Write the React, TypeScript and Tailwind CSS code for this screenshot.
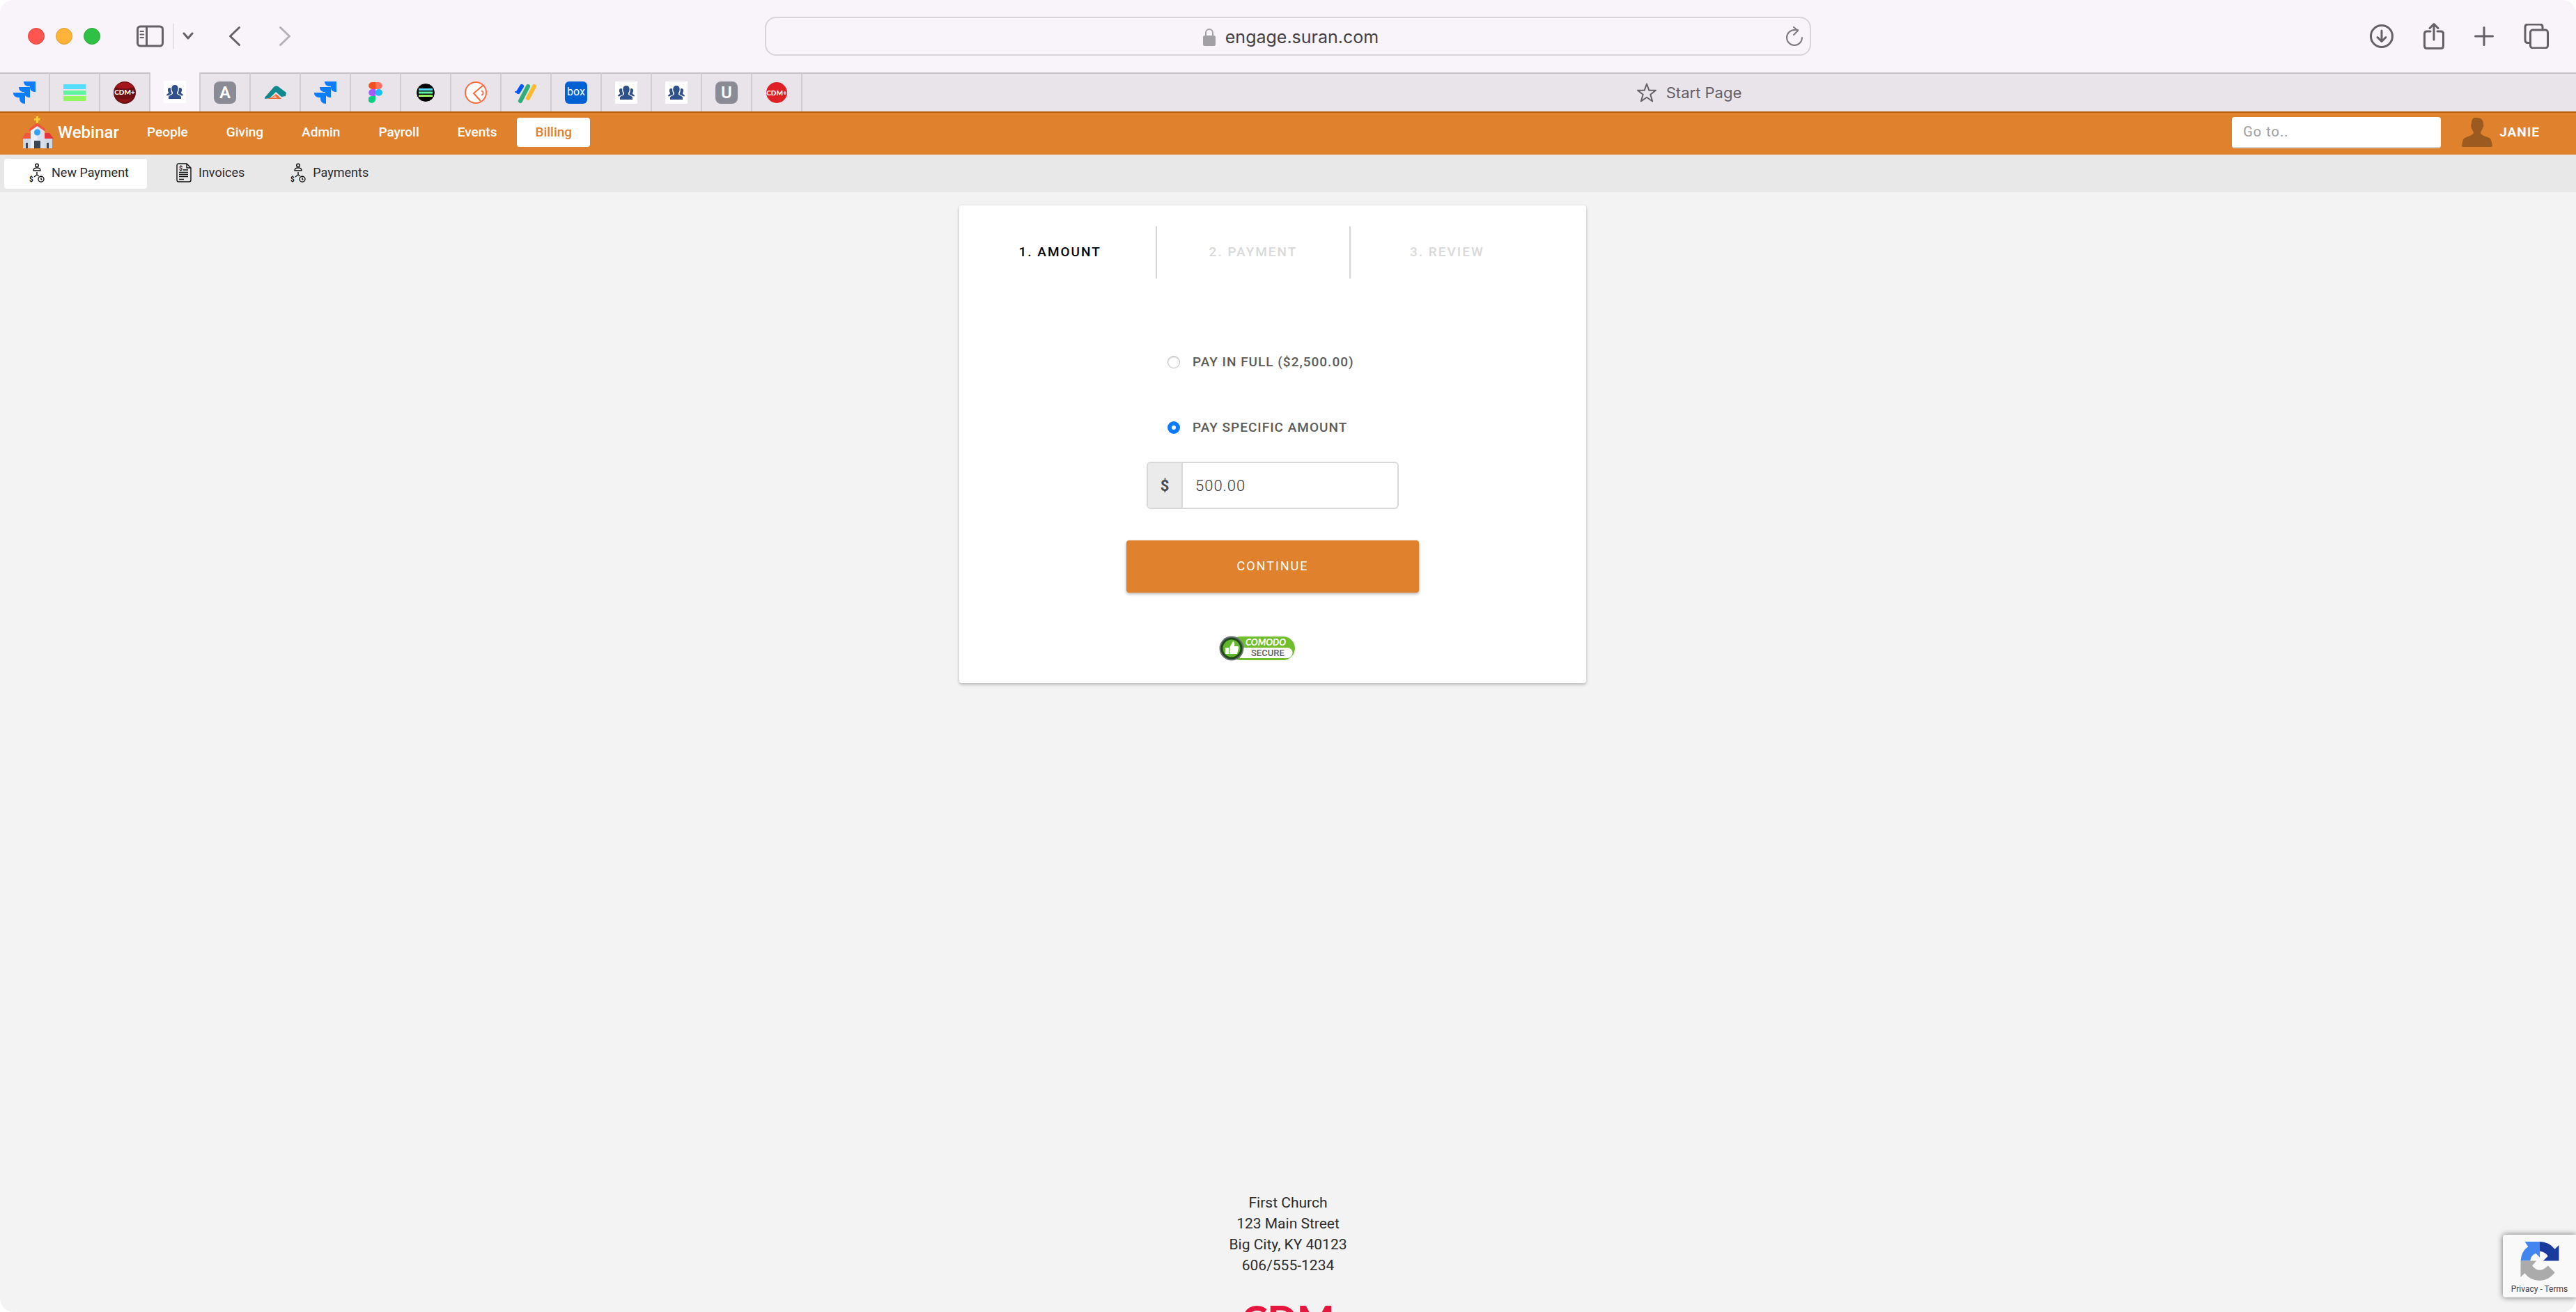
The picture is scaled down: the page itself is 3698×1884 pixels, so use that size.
import type { ReactNode } from "react";

const navItems = ["People", "Giving", "Admin", "Payroll", "Events"];

function JiraIcon() {
  return (
    <svg viewBox="0 0 32 36" preserveAspectRatio="none" className="size-8" fill="#0d7dff">
      <path d="M15 0h17v17c-5 0-8-3-8-8V8h-1c-5 0-8-3-8-8Z" />
      <path d="M8 9h16v17c-5 0-8-3-8-8v-1h-1c-4 0-7-3-7-8Z" />
      <path d="M0 18h17v18c-5 0-8-3-8-9v-1H8c-5 0-8-3-8-8Z" />
    </svg>
  );
}

function GreenBarsIcon() {
  return (
    <svg viewBox="0 0 32 24" className="h-6 w-8">
      <path d="M0 0h32v7H0z" fill="#55ddff" />
      <path d="M0 9h32v6H0z" fill="#5ff5a0" />
      <path d="M0 17h32v7H0z" fill="#93f65f" />
    </svg>
  );
}

function CdmRoundIcon() {
  return (
    <svg viewBox="0 0 32 32" className="size-8">
      <circle cx="16" cy="16" r="16" fill="#6d0f13" />
      <path d="M3 8a16 16 0 0 1 26 0q-13 5-26 0Z" fill="#a5141a" />
      <path d="M5 23q11 5 22 0-4 7-11 7T5 23Z" fill="#8d1217" />
      <text x="16" y="19" textAnchor="middle" fontSize="10" fontWeight="900" fill="#fff" fontFamily="Lato, sans-serif">CDM+</text>
    </svg>
  );
}

function PeopleIcon() {
  return (
    <span className="flex size-8 items-center justify-center bg-white">
      <svg viewBox="0 0 24 20" className="h-5 w-6" fill="#2f5089">
        <path d="M12 0c3.200 0 4.800 2.200 4.700 5.300 0 2.700-1.200 4-1.700 5.200v1.800c.5 2.200 5.500 1.800 6 5.200v2.500H3v-2.500c.5-3.400 5.500-3 6-5.200v-1.800C8.500 9.300 7.300 8 7.300 5.300 7.200 2.200 8.800 0 12 0Z" />
        <path d="M4.500 4C3 4 1.800 5.200 1.900 7.300c0 1.700.9 2.600 1.100 3.500 0 2-2.700 1.700-3 4.400h2.800c1-1.400 3.600-1.700 4.600-2.700V11C6.500 9.500 6 7.500 6.200 4.500Q5.500 4 4.500 4ZM19.500 4c1.500 0 2.700 1.200 2.600 3.300 0 1.700-.9 2.600-1.100 3.500 0 2 2.700 1.700 3 4.400h-2.800c-1-1.400-3.600-1.700-4.600-2.700V11c.9-1.500 1.400-3.500 1.200-6.500q.7-.5 1.700-.5Z" />
      </svg>
    </span>
  );
}

function LetterIcon({ letter }: { letter: string }) {
  return (
    <span className="flex size-8 items-center justify-center rounded-lg bg-[#8a8b95] text-2xl font-semibold text-white">
      {letter}
    </span>
  );
}

function PeakIcon() {
  return (
    <svg viewBox="0 0 32 20" className="h-5 w-8">
      <path d="M1 17 14 2q3-3 6-1l12 9-1 5-6 1-8-7-9 9-7 1Z" fill="#12888f" />
      <path d="M2 19q8 0 15-7l3 2 5 5Z" fill="#ef6c36" />
      <path d="m11 18 5-4 3 4Z" fill="#f8b48f" />
    </svg>
  );
}

function FigmaIcon() {
  return (
    <svg viewBox="0 0 20 32" preserveAspectRatio="none" className="h-[30px] w-5">
      <path d="M10 0H5.500a5.300 5.300 0 0 0 0 10.600H10Z" fill="#f24e1e" />
      <path d="M10 0h4.500a5.300 5.300 0 0 1 0 10.600H10Z" fill="#ff7262" />
      <path d="M10 10.600H5.500a5.300 5.300 0 0 0 0 10.600H10Z" fill="#a259ff" />
      <circle cx="14.800" cy="15.900" r="5.200" fill="#1abcfe" />
      <path d="M10 21.300H5.300A5.300 5.300 0 1 0 10 26.600Z" fill="#0acf83" />
    </svg>
  );
}

function BlackBarsIcon() {
  return (
    <svg viewBox="0 0 28 30" className="h-[30px] w-7">
      <circle cx="14" cy="15" r="13.500" fill="#000" stroke="#fff" />
      <path d="M4 9h20v3H4z" fill="#55ddff" />
      <path d="M4 13.500h20v3H4z" fill="#5ff5a0" />
      <path d="M4 18h20v3H4z" fill="#93f65f" />
    </svg>
  );
}

function OrangeRingIcon() {
  return (
    <svg viewBox="0 0 32 32" className="size-8" fill="none" stroke="#ff6a3d" strokeWidth="2">
      <circle cx="16" cy="16" r="15" fill="#fff" />
      <path d="M27 5 13 17l10 11M24 14q2.500-1 2.500 2.500T24 19" />
    </svg>
  );
}

function StripesIcon() {
  return (
    <svg viewBox="0 0 32 32" className="size-8" fill="none" strokeWidth="6" strokeLinecap="round">
      <path d="m10 7-5 8" stroke="#0057ff" />
      <path d="M1 15h6" stroke="#0057ff" strokeWidth="2" />
      <path d="M19 7 8 28" stroke="#2fae7b" />
      <path d="m28 7-9 17" stroke="#ffbb2e" />
    </svg>
  );
}

function BoxIcon() {
  return (
    <span className="flex h-8 w-8 items-center justify-center rounded-md bg-[#0061d5] pb-0.5 text-base text-white">
      box
    </span>
  );
}

function CdmRedIcon() {
  return (
    <span className="flex size-[30px] items-center justify-center rounded-full bg-[#de1f26] font-['Lato'] text-[10px] font-black text-white">
      CDM+
    </span>
  );
}

const tabs: { name: string; icon: ReactNode }[] = [
  { name: "Jira", icon: <JiraIcon /> },
  { name: "Bars", icon: <GreenBarsIcon /> },
  { name: "CDM", icon: <CdmRoundIcon /> },
  { name: "Engage", icon: <PeopleIcon /> },
  { name: "A", icon: <LetterIcon letter="A" /> },
  { name: "Peak", icon: <PeakIcon /> },
  { name: "Jira board", icon: <JiraIcon /> },
  { name: "Figma", icon: <FigmaIcon /> },
  { name: "Dark bars", icon: <BlackBarsIcon /> },
  { name: "Ring", icon: <OrangeRingIcon /> },
  { name: "Stripes", icon: <StripesIcon /> },
  { name: "Box", icon: <BoxIcon /> },
  { name: "Engage admin", icon: <PeopleIcon /> },
  { name: "Engage people", icon: <PeopleIcon /> },
  { name: "U", icon: <LetterIcon letter="U" /> },
  { name: "CDM+", icon: <CdmRedIcon /> },
];

function BrowserToolbar() {
  return (
    <div className="grid h-[104px] grid-cols-[1fr_minmax(0,1502px)_1fr] items-center bg-[#f8f4fa] text-[#655f66]">
      <div className="flex items-center pl-10">
        <div className="flex gap-4">
          <span className="size-6 rounded-full border border-[#e2463f] bg-[#ff5450]" />
          <span className="size-6 rounded-full border border-[#e09e2e] bg-[#ffb338]" />
          <span className="size-6 rounded-full border border-[#27a93a] bg-[#2fc146]" />
        </div>
        <button aria-label="Sidebar" className="ml-[52px]">
          <svg viewBox="0 0 40 32" className="h-8 w-10" fill="none" stroke="currentColor" strokeWidth="3">
            <rect x="1.500" y="2" width="36" height="28" rx="4" />
            <path d="M14.500 2v28" />
            <path d="M5.500 9h4.500M5.500 13.500h4.500M5.500 18h4.500" strokeWidth="2" strokeLinecap="round" />
          </svg>
        </button>
        <span className="ml-3 h-9 w-0.5 bg-[#e4e0e6]" />
        <button aria-label="Tab groups" className="ml-3">
          <svg viewBox="0 0 16 12" className="h-3 w-4" fill="none" stroke="currentColor" strokeWidth="3" strokeLinecap="round" strokeLinejoin="round">
            <path d="m2 2 6 7 6-7" />
          </svg>
        </button>
        <button aria-label="Back" className="ml-[50px]">
          <svg viewBox="0 0 18 30" className="h-[30px] w-[18px]" fill="none" stroke="currentColor" strokeWidth="3" strokeLinecap="round" strokeLinejoin="round">
            <path d="M15.500 2.500 2.500 15l13 12.500" />
          </svg>
        </button>
        <button aria-label="Forward" className="ml-[54px] text-[#b5b0b7]">
          <svg viewBox="0 0 18 30" className="h-[30px] w-[18px]" fill="none" stroke="currentColor" strokeWidth="3" strokeLinecap="round" strokeLinejoin="round">
            <path d="m2.500 2.500 13 12.500-13 12.500" />
          </svg>
        </button>
      </div>

      <div className="flex h-14 items-center rounded-2xl border-2 border-[#d8d5da] px-2.5">
        <div className="flex flex-1 items-center justify-center gap-3.5 pt-0.5 pl-8 font-['Inter'] text-[25px] leading-8 text-[#454147]">
          <svg viewBox="0 0 18 26" className="h-[26px] w-[18px]" fill="#a3a0a5">
            <path d="M4 12V7a5 5 0 0 1 10 0v5" fill="none" stroke="#a3a0a5" strokeWidth="2" />
            <rect y="11" width="18" height="15" rx="2.500" />
          </svg>
          engage.suran.com
        </div>
        <button aria-label="Reload" className="text-[#7c797e]">
          <svg viewBox="0 0 24 28" className="h-7 w-6" fill="none" stroke="currentColor" strokeWidth="2" strokeLinecap="round" strokeLinejoin="round">
            <path d="M23 16a11 11 0 1 1-11-11h5M11 1l6 5-6 6" />
          </svg>
        </button>
      </div>

      <div className="flex items-center justify-end gap-[43px] pr-[39px]">
        <button aria-label="Downloads">
          <svg viewBox="0 0 34 36" className="h-9 w-[34px]" fill="none" stroke="currentColor" strokeWidth="3" strokeLinecap="round" strokeLinejoin="round">
            <circle cx="17" cy="18" r="15.500" />
            <path d="M17 10v15M11 19.500l6 6 6-6" />
          </svg>
        </button>
        <button aria-label="Share">
          <svg viewBox="0 0 30 40" className="h-10 w-[30px]" fill="none" stroke="currentColor" strokeWidth="3" strokeLinecap="round" strokeLinejoin="round">
            <path d="M10 13H5q-3.500 0-3.500 3.500V34q0 3.500 3.500 3.500h20q3.500 0 3.500-3.500V16.500Q28.500 13 25 13h-5M15 25V3M9 8.500 15 2.500l6 6" />
          </svg>
        </button>
        <button aria-label="New tab">
          <svg viewBox="0 0 28 28" className="size-7" fill="none" stroke="currentColor" strokeWidth="3" strokeLinecap="round">
            <path d="M14 1.500v25M1.500 14h25" />
          </svg>
        </button>
        <button aria-label="Tab overview">
          <svg viewBox="0 0 36 36" className="size-9" fill="none" stroke="currentColor" strokeWidth="3">
            <path d="M8.500 27.500H6q-4 0-4-4V5q0-4 4-4h17q4 0 4 4v3.500" />
            <rect x="9.500" y="9" width="25" height="26" rx="3.500" />
          </svg>
        </button>
      </div>
    </div>
  );
}

function TabStrip() {
  return (
    <div className="flex h-14 bg-[#e9e4ea]">
      {tabs.map((tab, i) => (
        <button
          key={tab.name}
          aria-label={tab.name}
          className={
            i === 3
              ? "flex w-[72px] items-center justify-center border-r-2 border-[#d2cdd4] bg-[#f8f4fa]"
              : "flex w-[72px] items-center justify-center border-t-2 border-r-2 border-t-[#c5c1c7] border-r-[#d2cdd4]"
          }
        >
          {tab.icon}
        </button>
      ))}
      <button className="flex flex-1 items-center justify-center gap-3.5 border-t-2 border-[#c5c1c7] font-['Inter'] text-[22px] text-[#655f66]">
        <svg viewBox="0 0 28 28" className="size-7" fill="none" stroke="currentColor" strokeWidth="2" strokeLinejoin="round">
          <path d="m14 1.500 3.300 9.200H27l-7.700 6 2.900 9.800-8.200-5.700-8.200 5.700 2.900-9.800-7.700-6h9.700Z" />
        </svg>
        Start Page
      </button>
    </div>
  );
}

function ChurchIcon() {
  return (
    <svg viewBox="0 0 46 46" className="size-[46px]">
      <path d="M2 30h12v16H2zM32 30h12v16H32z" fill="#cfd8e6" />
      <path d="M13 20 22.500 12 33 20v26H13z" fill="#e9edf4" />
      <path d="M22.500 12 33 20v26H22.500z" fill="#dbe1ec" />
      <path d="M6 24h7v8H0z" fill="#f4553f" />
      <path d="M33 24h7l6 8H33z" fill="#e6353c" />
      <path d="M22.500 9 11 18v4l11.500-8L34 22v-4Z" fill="#f4553f" />
      <path d="M21 0h3v3h3v3h-3v4h-3V6h-3V3h3Z" fill="#ffcd38" />
      <circle cx="22.500" cy="23" r="4.500" fill="#35a1f4" />
      <path d="M18 35h9v11h-9zM6 38h3v8H6zM36 38h3v8h-3z" fill="#3b4558" />
    </svg>
  );
}

function PaymentIcon() {
  return (
    <svg viewBox="0 0 22 28" className="h-7 w-[22px]" fill="none" stroke="#111" strokeWidth="1.400" strokeLinejoin="round">
      <circle cx="11" cy="3.500" r="2.300" />
      <path d="M6 11q0-4 5-4t5 4ZM11 13v4M11 17l-4 3M11 17l3 2" />
      <circle cx="17" cy="23.300" r="4" />
      <path d="M17 21v2.500l1.500 1" />
      <text x="0" y="27" fontSize="10" fontWeight="700" fill="#111" stroke="none" fontFamily="Roboto, sans-serif">$</text>
    </svg>
  );
}

function InvoiceIcon() {
  return (
    <svg viewBox="0 0 22 28" className="h-7 w-[22px]" fill="none" stroke="#111" strokeWidth="1.400" strokeLinejoin="round">
      <path d="M15 1H3.500Q1 1 1 3.500v21Q1 27 3.500 27h15q2.500 0 2.500-2.500V7Zv6h6" />
      <path d="M10 10h7M4 13.500h13M4 16.500h13M4 19.500h13M4 23.500h7" />
      <text x="4" y="11" fontSize="9" fontWeight="700" fill="#111" stroke="none" fontFamily="Roboto, sans-serif">$</text>
    </svg>
  );
}

function SiteHeader() {
  return (
    <header>
      <div className="flex h-[62px] items-center bg-[#df812d] pr-[52px] pb-0.5 text-[19px] font-medium text-white shadow-[inset_0_2px_0_#b9600f]">
        <a href="#home" className="flex items-center gap-1.5 pl-[31px] text-2xl">
          <ChurchIcon />
          Webinar
        </a>
        <nav className="ml-3.5 flex flex-1 items-center gap-[3px]">
          {navItems.map((item) => (
            <a key={item} href={`#${item.toLowerCase()}`} className="px-[26px] leading-[42px]">
              {item}
            </a>
          ))}
          <a href="#billing" className="rounded bg-white px-[26px] leading-[42px] text-[#df812d]">
            Billing
          </a>
        </nav>
        <input
          aria-label="Go to"
          placeholder="Go to.."
          className="h-[45px] w-[300px] rounded border-b-2 border-[#d3d3d3] bg-white px-4 text-xl font-normal tracking-[1px] text-black placeholder:text-[#a0a0a0]"
        />
        <button className="ml-[30px] flex items-center gap-2.5 text-[19px] font-bold tracking-[1px]">
          <svg viewBox="0 0 44 42" className="h-[42px] w-11" fill="#9c5a20">
            <path d="M22 0c6 0 9 4 9 9 1 2 0 5-1 6-1 3-3 5-3 7 1 4 10 5 14 8 2 3 2 7 3 10q0 2-2 2H3q-3 0-3-2c1-4 1-7 3-10 4-3 12-4 14-8 0-2-2-4-3-7-1-2-1-5 0-7 0-6 3-9 8-9Z" />
          </svg>
          JANIE
        </button>
      </div>
      <nav className="flex h-[54px] items-center bg-[#e8e8e8] px-1.5 text-lg text-[#2b2b2b]">
        <a href="#new" className="flex h-[43px] items-center gap-2.5 rounded bg-white pr-[26px] pb-0.5 pl-9">
          <PaymentIcon />
          New Payment
        </a>
        <a href="#invoices" className="flex items-center gap-2.5 pr-[26px] pb-0.5 pl-[42px]">
          <InvoiceIcon />
          Invoices
        </a>
        <a href="#payments" className="flex items-center gap-2.5 pb-0.5 pl-10">
          <PaymentIcon />
          Payments
        </a>
      </nav>
    </header>
  );
}

function ComodoBadge() {
  return (
    <svg viewBox="0 0 110 38" className="h-[38px] w-[110px]">
      <rect x="14" y="2" width="95" height="34" rx="17" fill="#72bd2c" />
      <path d="M30 18h68a7.500 7.500 0 0 1 0 15H30Z" fill="#fff" />
      <circle cx="18" cy="19" r="17.500" fill="#6d7275" />
      <circle cx="18" cy="19" r="15.500" fill="#1f4a1a" />
      <circle cx="18" cy="19" r="12.500" fill="#62b82a" />
      <path d="M9 18h5v9H9zM15 18l5-9q3 0 2 7h5q2 1 1 3l-2 8H15Z" fill="#fff" />
      <text x="38" y="15" fontSize="13" fontWeight="900" fontStyle="italic" fill="#fff" fontFamily="Lato, sans-serif">COMODO</text>
      <text x="46" y="30" fontSize="13" fontWeight="500" fill="#5d6063" fontFamily="Roboto, sans-serif">SECURE</text>
    </svg>
  );
}

function PaymentCard() {
  return (
    <form className="w-full max-w-[900px] rounded bg-white pt-[30px] pb-[31px] text-[#5b5b5b] shadow-[0_2px_4px_rgba(0,0,0,0.25)]">
      <ol className="mr-[61px] ml-[7px] grid grid-cols-3 text-center text-[19px] leading-[73px] font-medium tracking-[2px] text-[#d9d9d9]">
        <li className="border-r-2 border-[#d6d6d6] pb-0.5 text-black">1. AMOUNT</li>
        <li className="border-r-2 border-[#d6d6d6] pb-0.5">2. PAYMENT</li>
        <li>3. REVIEW</li>
      </ol>

      <div className="mt-[105px] ml-[299px] flex flex-col gap-16 text-[19px] leading-[30px] font-medium tracking-[1px]">
        <label className="flex items-center gap-[18px]">
          <input
            type="radio"
            name="amount"
            className="size-[18px] appearance-none rounded-full border border-[#bdbdbd] shadow-[inset_0_1px_2px_rgba(0,0,0,0.2)]"
          />
          PAY IN FULL ($2,500.00)
        </label>
        <label className="flex items-center gap-[18px]">
          <input
            type="radio"
            name="amount"
            defaultChecked
            className="size-[18px] appearance-none rounded-full border-[6px] border-[#0a7aff] bg-white"
          />
          PAY SPECIFIC AMOUNT
        </label>
      </div>

      <div className="mx-auto mt-[34px] flex h-[68px] w-[362px] overflow-hidden rounded-md border-2 border-[#d8d8d8]">
        <label htmlFor="amount" className="flex w-[50px] items-center justify-center border-r-2 border-[#d8d8d8] bg-[#ebebeb] text-[22px] font-bold text-[#4a4a4a]">
          $
        </label>
        <input id="amount" defaultValue="500.00" className="min-w-0 flex-1 px-[18px] text-[22px] font-light tracking-[1px] text-[#333]" />
      </div>

      <button
        type="button"
        className="mx-auto mt-[45px] block h-[75px] w-[420px] rounded bg-[#df812d] pb-0.5 text-lg tracking-[2px] text-white shadow-[0_2px_4px_rgba(0,0,0,0.3)]"
      >
        CONTINUE
      </button>

      <a href="#secure" aria-label="Comodo Secure" className="mt-[61px] ml-[373px] block w-[110px]">
        <ComodoBadge />
      </a>
    </form>
  );
}

function RecaptchaBadge() {
  return (
    <aside className="absolute right-0 bottom-[21px] flex h-[90px] w-[105px] flex-col items-center rounded-l bg-[#f9f9f9] pt-2.5 text-[12px] leading-4 text-[#3f3f3f] shadow-[0_0_8px_rgba(0,0,0,0.55)]">
      <svg viewBox="0 0 56 57" className="mb-1 h-14 w-14">
        <path d="M28 0v23l-6-6q-7 3-8 11H0Q1 14 11 7L6 0Z" fill="#4285ee" />
        <path d="M28 0q13 0 22 11l6-6v23H33l7-7q-4-6-12-7Z" fill="#1a3a9e" />
        <path d="M0 28h23l-6 7q10 13 23 0l10 10q-8 11-22 12Q14 57 6 46l-6 6Z" fill="#ababab" />
      </svg>
      <p>
        <a href="#privacy">Privacy</a> - <a href="#terms">Terms</a>
      </p>
    </aside>
  );
}

export default function App() {
  return (
    <div className="bg-white">
      <div className="relative flex h-screen flex-col overflow-hidden rounded-[20px] bg-[#f3f3f3] font-['Roboto',sans-serif]">
        <BrowserToolbar />
        <TabStrip />
        <SiteHeader />
        <main className="flex flex-1 items-start justify-center pt-[19px] pr-11">
          <PaymentCard />
        </main>
        <footer className="flex h-[172px] shrink-0 flex-col items-center text-center text-[21px] leading-[30px] text-[#2b2b2b]">
          <address className="not-italic">
            <div>First Church</div>
            <div>123 Main Street</div>
            <div>Big City, KY 40123</div>
            <div>606/555-1234</div>
          </address>
          <strong className="mt-8 flex font-['Lato'] text-[56px] leading-[60px] font-black text-[#e5173f]">
            CDM
          </strong>
        </footer>
        <RecaptchaBadge />
      </div>
    </div>
  );
}
